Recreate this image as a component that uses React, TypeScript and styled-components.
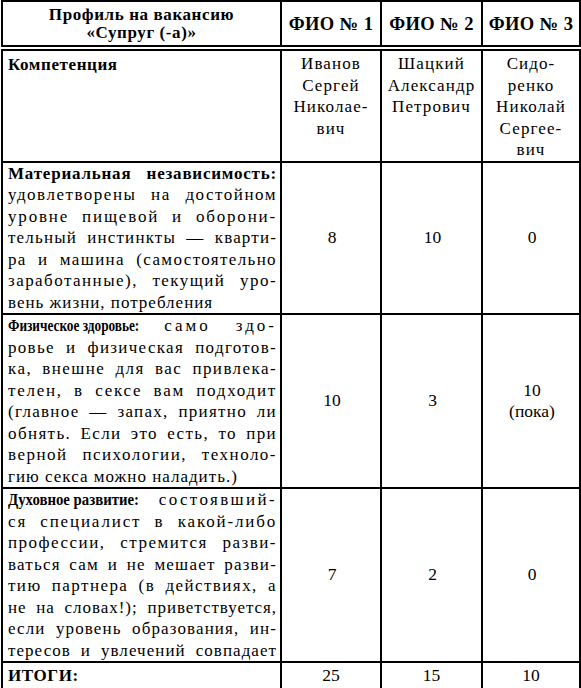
import { useLayoutEffect, useRef, useState, type ReactNode } from "react";
import styled, { createGlobalStyle } from "styled-components";

const Global = createGlobalStyle`
  html, body { margin: 0; padding: 0; background: #fff; }
  body { font-family: "Liberation Serif", "Times New Roman", serif; color: #000; }
`;

const Page = styled.div`
  padding: 0 0 0 1px;
`;

const Table = styled.table`
  border-collapse: collapse;
  table-layout: fixed;
  width: 578px;
  font-family: "Liberation Serif", "Times New Roman", serif;
  font-size: 17px;
  color: #000;
`;

const Col = styled.col<{ $w: number }>`
  width: ${(p) => p.$w}px;
`;

const HeadRow = styled.tr`
  border-bottom: 6px double #000;
`;

const Th = styled.th`
  border: 2px solid #000;
  padding: 4px 2px 3px;
  font-weight: bold;
  font-size: 17px;
  line-height: 18px;
  letter-spacing: 0.6px;
  text-align: center;
  vertical-align: middle;
`;

const FioTh = styled(Th)`
  font-size: 18.5px;
  letter-spacing: 0.4px;
  padding: 4px 0 3px;
  white-space: nowrap;
`;

const Td = styled.td<{ $pad?: string }>`
  border: 2px solid #000;
  padding: ${(p) => p.$pad ?? "0 3px 0 5px"};
  line-height: 21.5px;
  vertical-align: top;
`;

const ValueTd = styled(Td)`
  text-align: center;
  vertical-align: middle;
  font-size: 17.5px;
`;

const NameTd = styled(Td)`
  text-align: center;
  letter-spacing: 1.1px;
  line-height: 21.5px;
  padding: 2px 0 0;
`;

const LineBox = styled.span<{ $mode: "measure" | "justify" | "left" }>`
  display: block;
  white-space: ${(p) => (p.$mode === "measure" ? "nowrap" : "normal")};
  text-align: ${(p) => (p.$mode === "justify" ? "justify" : "left")};
  text-align-last: ${(p) => (p.$mode === "justify" ? "justify" : "left")};
`;

const Bold = styled.b`
  font-weight: bold;
`;

// condensed bold face, imitated by a horizontal squeeze
const Squeezed = styled.b<{ $scale: number }>`
  display: inline-block;
  font-weight: bold;
  letter-spacing: 0;
  transform: scaleX(${(p) => p.$scale});
  transform-origin: left center;
`;

const Label = styled.b`
  display: block;
  font-weight: bold;
  letter-spacing: 0.6px;
`;

const StackLine = styled.span`
  display: block;
`;

const Term = ({ text, scale }: { text: string; scale?: number }) => {
  const ref = useRef<HTMLElement>(null);
  useLayoutEffect(() => {
    if (!scale || !ref.current) return;
    const w = ref.current.offsetWidth;
    ref.current.style.marginRight = `${-(1 - scale) * w}px`;
  }, [scale, text]);
  if (!scale) return <Bold>{text}</Bold>;
  return (
    <Squeezed ref={ref} $scale={scale}>
      {text}
    </Squeezed>
  );
};

// one typeset line: spread over the cell width with letter spacing + word spacing
const JLine = ({
  children,
  last,
  count,
}: {
  children: ReactNode;
  last?: boolean;
  count: number;
}) => {
  const box = useRef<HTMLSpanElement>(null);
  const inner = useRef<HTMLSpanElement>(null);
  const [ls, setLs] = useState<number | null>(last ? 1 : null);

  useLayoutEffect(() => {
    if (last || !box.current || !inner.current) return;
    const avail = box.current.clientWidth;
    const w = inner.current.getBoundingClientRect().width;
    const extra = avail - w - 1;
    setLs(Math.max(0, Math.min(3, (extra * 0.7) / Math.max(1, count))));
  }, [last, count]);

  const mode = last ? "left" : ls === null ? "measure" : "justify";
  return (
    <LineBox ref={box} $mode={mode} style={{ letterSpacing: `${ls ?? 0}px` }}>
      <span ref={inner}>{children}</span>
    </LineBox>
  );
};

type Row = {
  term: string;
  scale?: number;
  lines: string[];
  lastJustified?: boolean;
  values: string[][];
};

const rows: Row[] = [
  {
    term: "Материальная независимость:",
    lines: [
      "",
      "удовлетворены на достойном",
      "уровне пищевой и оборони-",
      "тельный инстинкты — кварти-",
      "ра и машина (самостоятельно",
      "заработанные), текущий уро-",
      "вень жизни, потребления",
    ],
    values: [["8"], ["10"], ["0"]],
  },
  {
    term: "Физическое здоровье:",
    scale: 0.78,
    lines: [
      " само здо-",
      "ровье и физическая подготов-",
      "ка, внешне для вас привлека-",
      "телен, в сексе вам подходит",
      "(главное — запах, приятно ли",
      "обнять. Если это есть, то при",
      "верной психологии, техноло-",
      "гию секса можно наладить.)",
    ],
    values: [["10"], ["3"], ["10", "(пока)"]],
  },
  {
    term: "Духовное развитие:",
    scale: 0.87,
    lines: [
      " состоявший-",
      "ся специалист в какой-либо",
      "профессии, стремится разви-",
      "ваться сам и не мешает разви-",
      "тию партнера (в действиях, а",
      "не на словах!); приветствуется,",
      "если уровень образования, ин-",
      "тересов и увлечений совпадает",
    ],
    lastJustified: true,
    values: [["7"], ["2"], ["0"]],
  },
];

const names = [
  ["Иванов", "Сергей", "Николае-", "вич"],
  ["Шацкий", "Александр", "Петрович"],
  ["Сидо-", "ренко", "Николай", "Сергее-", "вич"],
];

const Stack = ({ items }: { items: string[] }) => (
  <>
    {items.map((t, i) => (
      <StackLine key={i}>{t}</StackLine>
    ))}
  </>
);

export default function App() {
  return (
    <Page>
      <Global />
      <Table>
        <colgroup>
          <Col $w={279} />
          <Col $w={100} />
          <Col $w={101} />
          <Col $w={98} />
        </colgroup>
        <thead>
          <HeadRow>
            <Th>
              Профиль на вакансию
              <br />
              «Супруг (-а)»
            </Th>
            <FioTh>ФИО № 1</FioTh>
            <FioTh>ФИО № 2</FioTh>
            <FioTh>ФИО № 3</FioTh>
          </HeadRow>
        </thead>
        <tbody>
          <tr>
            <Td $pad="3px 3px 0 5px">
              <Label>Компетенция</Label>
            </Td>
            {names.map((n, i) => (
              <NameTd key={i}>
                <Stack items={n} />
              </NameTd>
            ))}
          </tr>
          {rows.map((r) => (
            <tr key={r.term}>
              <Td>
                {r.lines.map((l, i) => {
                  const last = i === r.lines.length - 1 && !r.lastJustified;
                  if (i === 0) {
                    const count = l.length + (r.scale ? 0 : r.term.length);
                    return (
                      <JLine key={i} count={count}>
                        <Term text={r.term} scale={r.scale} />
                        {l}
                      </JLine>
                    );
                  }
                  return (
                    <JLine key={i} last={last} count={l.length}>
                      {l}
                    </JLine>
                  );
                })}
              </Td>
              {r.values.map((v, i) => (
                <ValueTd key={i}>
                  <Stack items={v} />
                </ValueTd>
              ))}
            </tr>
          ))}
          <tr>
            <Td $pad="2px 3px 1px 5px">
              <Label>ИТОГИ:</Label>
            </Td>
            <ValueTd $pad="2px 0 1px">25</ValueTd>
            <ValueTd $pad="2px 0 1px">15</ValueTd>
            <ValueTd $pad="2px 0 1px">10</ValueTd>
          </tr>
        </tbody>
      </Table>
    </Page>
  );
}
